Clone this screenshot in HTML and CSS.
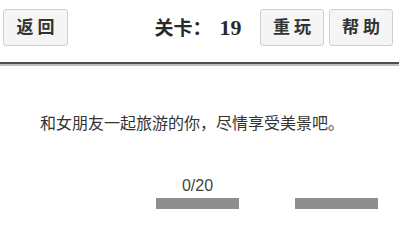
FILE: index.html
```html
<!DOCTYPE html>
<html lang="zh">
<head>
<meta charset="utf-8">
<title>关卡</title>
<link rel="stylesheet" href="styles.css">
</head>
<body>
<header class="topbar">
  <div class="left"><button class="btn">返回</button></div>
  <div class="title">关卡：<span class="num">19</span></div>
  <div class="right"><button class="btn">重玩</button><button class="btn">帮助</button></div>
</header>
<div class="rule"></div>
<main class="content">
  <p class="message">和女朋友一起旅游的你，尽情享受美景吧。</p>
  <div class="slots">
    <div class="slot">
      <div class="label">0/20</div>
      <div class="bar"></div>
    </div>
    <div class="slot">
      <div class="label"></div>
      <div class="bar"></div>
    </div>
  </div>
</main>
</body>
</html>
```
FILE: styles.css
```css
html, body {
  margin: 0;
  padding: 0;
  background: #ffffff;
}
body {
  width: 399px;
  height: 237px;
  overflow: hidden;
  font-family: "Noto Sans CJK SC", "Noto Sans", sans-serif;
  color: #333;
}
.topbar {
  height: 62px;
  box-sizing: border-box;
  padding: 9px 6px 0 3px;
  display: grid;
  grid-template-columns: 1fr auto 1fr;
  align-items: start;
}
.left { display: flex; justify-content: flex-start; }
.right { display: flex; justify-content: flex-end; gap: 5px; }
.btn {
  width: 64px;
  height: 37px;
  box-sizing: border-box;
  margin: 0;
  padding: 0 0 0 4px;
  background: #f5f5f5;
  border: 1px solid #cfcfcf;
  border-radius: 3px;
  font-family: "Liberation Serif", "Noto Sans CJK SC", serif;
  font-weight: 700;
  font-size: 17px;
  letter-spacing: 4px;
  color: #333;
  line-height: 35px;
}
.left .btn { width: 65px; }
.title {
  font-family: "Liberation Serif", "Noto Sans CJK SC", serif;
  font-weight: 700;
  font-size: 19px;
  color: #2a2a2a;
  line-height: 37px;
  white-space: nowrap;
}
.title .num {
  font-size: 22px;
  margin-left: 8px;
}
.rule {
  height: 0;
  border-top: 2px solid #4f4f4f;
  border-bottom: 2px solid #bdbdbd;
}
.content {
  padding-top: 44px;
}
.message {
  margin: 0;
  padding-right: 15px;
  text-align: center;
  font-size: 16px;
  line-height: 24px;
  color: #333;
}
.slots {
  margin-top: 43px;
  padding-left: 156px;
  display: flex;
  gap: 56px;
}
.slot {
  width: 83px;
  display: flex;
  flex-direction: column;
  align-items: center;
  gap: 3px;
}
.label {
  height: 18px;
  font-family: "Liberation Sans", Arial, sans-serif;
  font-size: 16px;
  line-height: 18px;
  color: #444;
}
.bar {
  width: 83px;
  height: 11px;
  background: #8e8e8e;
}
```
